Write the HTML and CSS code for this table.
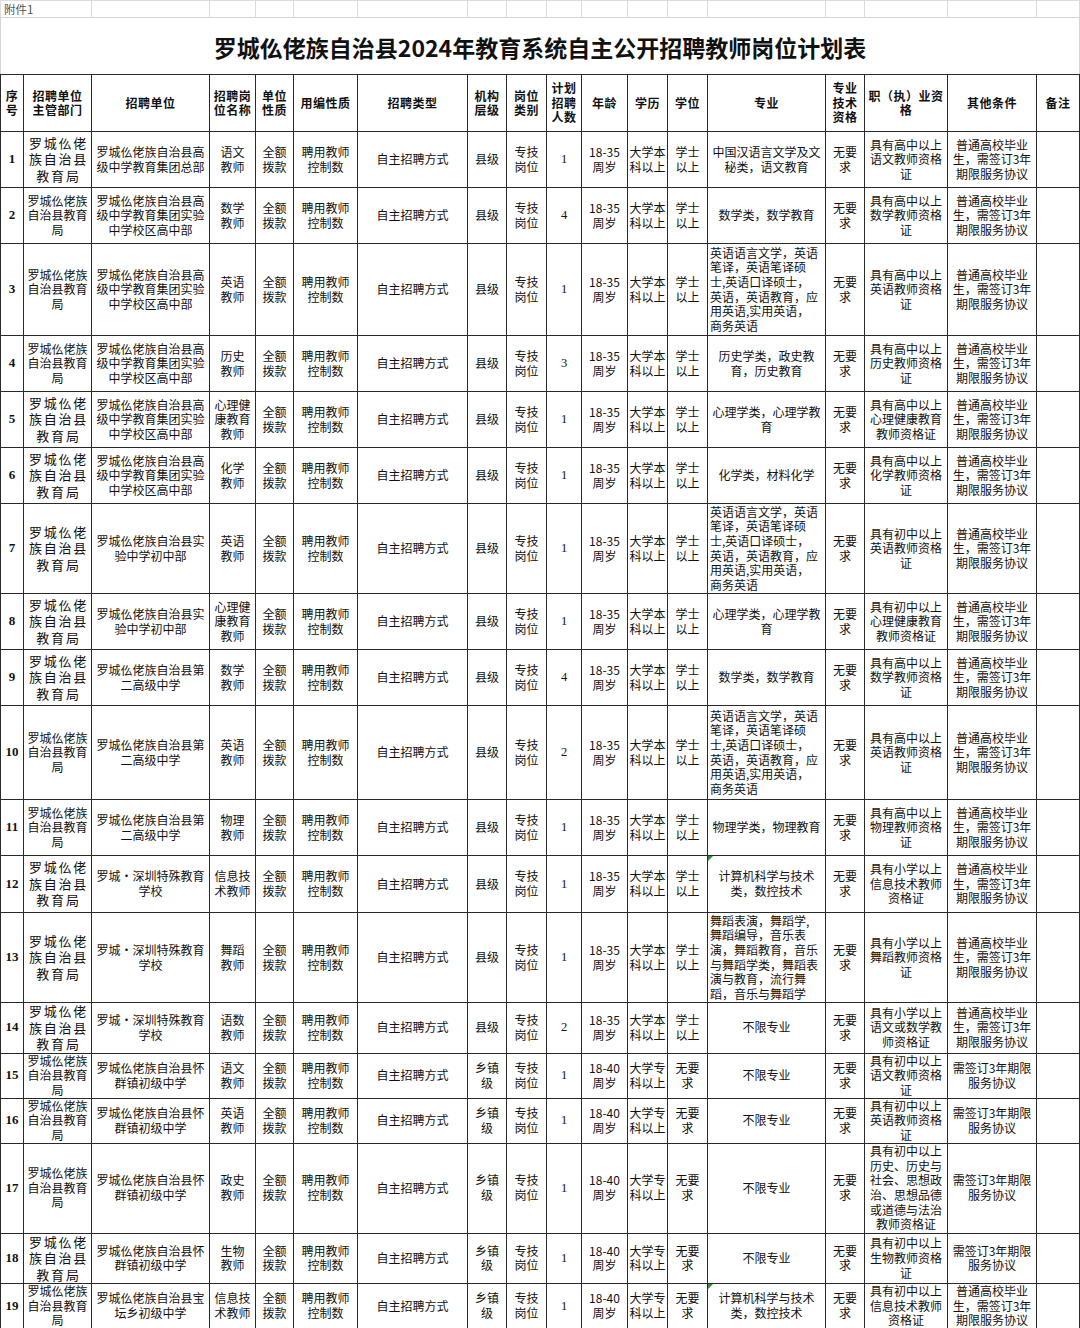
FILE: index.html
```html
<!DOCTYPE html>
<html lang="zh-CN">
<head>
<meta charset="utf-8">
<title>罗城仫佬族自治县2024年教育系统自主公开招聘教师岗位计划表</title>
<link rel="stylesheet" href="styles.css">
</head>
<body>
<table class="plan">
<colgroup>
<col class="c1"><col class="c2"><col class="c3"><col class="c4"><col class="c5"><col class="c6"><col class="c7"><col class="c8"><col class="c9"><col class="c10"><col class="c11"><col class="c12"><col class="c13"><col class="c14"><col class="c15"><col class="c16"><col class="c17"><col class="c18">
</colgroup>
<tbody>
<tr class="h17 annex"><td colspan="2" class="annex-label">附件1</td><td></td><td></td><td></td><td></td><td></td><td></td><td></td><td></td><td></td><td></td><td></td><td></td><td></td><td></td><td></td><td></td></tr>
<tr class="h57"><td colspan="18" class="title">罗城仫佬族自治县2024年教育系统自主公开招聘教师岗位计划表</td></tr>
<tr class="h57 head">
<td>序<br>号</td><td>招聘单位<br>主管部门</td><td>招聘单位</td><td>招聘岗<br>位名称</td><td>单位<br>性质</td><td>用编性质</td><td>招聘类型</td><td>机构<br>层级</td><td>岗位<br>类别</td><td>计划<br>招聘<br>人数</td><td>年龄</td><td>学历</td><td>学位</td><td>专业</td><td>专业<br>技术<br>资格</td><td>职（执）业资<br>格</td><td>其他条件</td><td>备注</td>
</tr>

<tr class="h56">
<td class="no">1</td><td class="dist">罗城仫佬<br>族自治县<br>教育局</td><td>罗城仫佬族自治县高<br>级中学教育集团总部</td><td>语文<br>教师</td><td>全额<br>拨款</td><td>聘用教师<br>控制数</td><td>自主招聘方式</td><td>县级</td><td>专技<br>岗位</td><td class="num">1</td><td>18-35<br>周岁</td><td>大学本<br>科以上</td><td>学士<br>以上</td><td>中国汉语言文学及文<br>秘类，语文教育</td><td>无要<br>求</td><td>具有高中以上<br>语文教师资格<br>证</td><td>普通高校毕业<br>生，需签订3年<br>期限服务协议</td><td></td>
</tr>

<tr class="h56">
<td class="no">2</td><td>罗城仫佬族<br>自治县教育<br>局</td><td>罗城仫佬族自治县高<br>级中学教育集团实验<br>中学校区高中部</td><td>数学<br>教师</td><td>全额<br>拨款</td><td>聘用教师<br>控制数</td><td>自主招聘方式</td><td>县级</td><td>专技<br>岗位</td><td class="num">4</td><td>18-35<br>周岁</td><td>大学本<br>科以上</td><td>学士<br>以上</td><td>数学类，数学教育</td><td>无要<br>求</td><td>具有高中以上<br>数学教师资格<br>证</td><td>普通高校毕业<br>生，需签订3年<br>期限服务协议</td><td></td>
</tr>

<tr class="h92">
<td class="no">3</td><td>罗城仫佬族<br>自治县教育<br>局</td><td>罗城仫佬族自治县高<br>级中学教育集团实验<br>中学校区高中部</td><td>英语<br>教师</td><td>全额<br>拨款</td><td>聘用教师<br>控制数</td><td>自主招聘方式</td><td>县级</td><td>专技<br>岗位</td><td class="num">1</td><td>18-35<br>周岁</td><td>大学本<br>科以上</td><td>学士<br>以上</td><td class="lft">英语语言文学，英语<br>笔译，英语笔译硕<br>士,英语口译硕士，<br>英语，英语教育，应<br>用英语,实用英语，<br>商务英语</td><td>无要<br>求</td><td>具有高中以上<br>英语教师资格<br>证</td><td>普通高校毕业<br>生，需签订3年<br>期限服务协议</td><td></td>
</tr>

<tr class="h56">
<td class="no">4</td><td>罗城仫佬族<br>自治县教育<br>局</td><td>罗城仫佬族自治县高<br>级中学教育集团实验<br>中学校区高中部</td><td>历史<br>教师</td><td>全额<br>拨款</td><td>聘用教师<br>控制数</td><td>自主招聘方式</td><td>县级</td><td>专技<br>岗位</td><td class="num">3</td><td>18-35<br>周岁</td><td>大学本<br>科以上</td><td>学士<br>以上</td><td>历史学类，政史教<br>育，历史教育</td><td>无要<br>求</td><td>具有高中以上<br>历史教师资格<br>证</td><td>普通高校毕业<br>生，需签订3年<br>期限服务协议</td><td></td>
</tr>

<tr class="h56">
<td class="no">5</td><td class="dist">罗城仫佬<br>族自治县<br>教育局</td><td>罗城仫佬族自治县高<br>级中学教育集团实验<br>中学校区高中部</td><td>心理健<br>康教育<br>教师</td><td>全额<br>拨款</td><td>聘用教师<br>控制数</td><td>自主招聘方式</td><td>县级</td><td>专技<br>岗位</td><td class="num">1</td><td>18-35<br>周岁</td><td>大学本<br>科以上</td><td>学士<br>以上</td><td>心理学类，心理学教<br>育</td><td>无要<br>求</td><td>具有高中以上<br>心理健康教育<br>教师资格证</td><td>普通高校毕业<br>生，需签订3年<br>期限服务协议</td><td></td>
</tr>

<tr class="h56">
<td class="no">6</td><td class="dist">罗城仫佬<br>族自治县<br>教育局</td><td>罗城仫佬族自治县高<br>级中学教育集团实验<br>中学校区高中部</td><td>化学<br>教师</td><td>全额<br>拨款</td><td>聘用教师<br>控制数</td><td>自主招聘方式</td><td>县级</td><td>专技<br>岗位</td><td class="num">1</td><td>18-35<br>周岁</td><td>大学本<br>科以上</td><td>学士<br>以上</td><td>化学类，材料化学</td><td>无要<br>求</td><td>具有高中以上<br>化学教师资格<br>证</td><td>普通高校毕业<br>生，需签订3年<br>期限服务协议</td><td></td>
</tr>

<tr class="h90">
<td class="no">7</td><td class="dist">罗城仫佬<br>族自治县<br>教育局</td><td>罗城仫佬族自治县实<br>验中学初中部</td><td>英语<br>教师</td><td>全额<br>拨款</td><td>聘用教师<br>控制数</td><td>自主招聘方式</td><td>县级</td><td>专技<br>岗位</td><td class="num">1</td><td>18-35<br>周岁</td><td>大学本<br>科以上</td><td>学士<br>以上</td><td class="lft">英语语言文学，英语<br>笔译，英语笔译硕<br>士,英语口译硕士，<br>英语，英语教育，应<br>用英语,实用英语，<br>商务英语</td><td>无要<br>求</td><td>具有初中以上<br>英语教师资格<br>证</td><td>普通高校毕业<br>生，需签订3年<br>期限服务协议</td><td></td>
</tr>

<tr class="h56">
<td class="no">8</td><td class="dist">罗城仫佬<br>族自治县<br>教育局</td><td>罗城仫佬族自治县实<br>验中学初中部</td><td>心理健<br>康教育<br>教师</td><td>全额<br>拨款</td><td>聘用教师<br>控制数</td><td>自主招聘方式</td><td>县级</td><td>专技<br>岗位</td><td class="num">1</td><td>18-35<br>周岁</td><td>大学本<br>科以上</td><td>学士<br>以上</td><td>心理学类，心理学教<br>育</td><td>无要<br>求</td><td>具有初中以上<br>心理健康教育<br>教师资格证</td><td>普通高校毕业<br>生，需签订3年<br>期限服务协议</td><td></td>
</tr>

<tr class="h56">
<td class="no">9</td><td class="dist">罗城仫佬<br>族自治县<br>教育局</td><td>罗城仫佬族自治县第<br>二高级中学</td><td>数学<br>教师</td><td>全额<br>拨款</td><td>聘用教师<br>控制数</td><td>自主招聘方式</td><td>县级</td><td>专技<br>岗位</td><td class="num">4</td><td>18-35<br>周岁</td><td>大学本<br>科以上</td><td>学士<br>以上</td><td>数学类，数学教育</td><td>无要<br>求</td><td>具有高中以上<br>数学教师资格<br>证</td><td>普通高校毕业<br>生，需签订3年<br>期限服务协议</td><td></td>
</tr>

<tr class="h94">
<td class="no">10</td><td>罗城仫佬族<br>自治县教育<br>局</td><td>罗城仫佬族自治县第<br>二高级中学</td><td>英语<br>教师</td><td>全额<br>拨款</td><td>聘用教师<br>控制数</td><td>自主招聘方式</td><td>县级</td><td>专技<br>岗位</td><td class="num">2</td><td>18-35<br>周岁</td><td>大学本<br>科以上</td><td>学士<br>以上</td><td class="lft">英语语言文学，英语<br>笔译，英语笔译硕<br>士,英语口译硕士，<br>英语，英语教育，应<br>用英语,实用英语，<br>商务英语</td><td>无要<br>求</td><td>具有高中以上<br>英语教师资格<br>证</td><td>普通高校毕业<br>生，需签订3年<br>期限服务协议</td><td></td>
</tr>

<tr class="h56">
<td class="no">11</td><td>罗城仫佬族<br>自治县教育<br>局</td><td>罗城仫佬族自治县第<br>二高级中学</td><td>物理<br>教师</td><td>全额<br>拨款</td><td>聘用教师<br>控制数</td><td>自主招聘方式</td><td>县级</td><td>专技<br>岗位</td><td class="num">1</td><td>18-35<br>周岁</td><td>大学本<br>科以上</td><td>学士<br>以上</td><td>物理学类，物理教育</td><td>无要<br>求</td><td>具有高中以上<br>物理教师资格<br>证</td><td>普通高校毕业<br>生，需签订3年<br>期限服务协议</td><td></td>
</tr>

<tr class="h57">
<td class="no">12</td><td class="dist">罗城仫佬<br>族自治县<br>教育局</td><td>罗城・深圳特殊教育<br>学校</td><td>信息技<br>术教师</td><td>全额<br>拨款</td><td>聘用教师<br>控制数</td><td>自主招聘方式</td><td>县级</td><td>专技<br>岗位</td><td class="num">1</td><td>18-35<br>周岁</td><td>大学本<br>科以上</td><td>学士<br>以上</td><td class="flag">计算机科学与技术<br>类，数控技术</td><td>无要<br>求</td><td>具有小学以上<br>信息技术教师<br>资格证</td><td>普通高校毕业<br>生，需签订3年<br>期限服务协议</td><td></td>
</tr>

<tr class="h90">
<td class="no">13</td><td class="dist">罗城仫佬<br>族自治县<br>教育局</td><td>罗城・深圳特殊教育<br>学校</td><td>舞蹈<br>教师</td><td>全额<br>拨款</td><td>聘用教师<br>控制数</td><td>自主招聘方式</td><td>县级</td><td>专技<br>岗位</td><td class="num">1</td><td>18-35<br>周岁</td><td>大学本<br>科以上</td><td>学士<br>以上</td><td class="lft">舞蹈表演，舞蹈学,<br>舞蹈编导，音乐表<br>演，舞蹈教育，音乐<br>与舞蹈学类，舞蹈表<br>演与教育，流行舞<br>蹈，音乐与舞蹈学</td><td>无要<br>求</td><td>具有小学以上<br>舞蹈教师资格<br>证</td><td>普通高校毕业<br>生，需签订3年<br>期限服务协议</td><td></td>
</tr>

<tr class="h50">
<td class="no">14</td><td class="dist">罗城仫佬<br>族自治县<br>教育局</td><td>罗城・深圳特殊教育<br>学校</td><td>语数<br>教师</td><td>全额<br>拨款</td><td>聘用教师<br>控制数</td><td>自主招聘方式</td><td>县级</td><td>专技<br>岗位</td><td class="num">2</td><td>18-35<br>周岁</td><td>大学本<br>科以上</td><td>学士<br>以上</td><td>不限专业</td><td>无要<br>求</td><td>具有小学以上<br>语文或数学教<br>师资格证</td><td>普通高校毕业<br>生，需签订3年<br>期限服务协议</td><td></td>
</tr>

<tr class="h45">
<td class="no">15</td><td>罗城仫佬族<br>自治县教育<br>局</td><td>罗城仫佬族自治县怀<br>群镇初级中学</td><td>语文<br>教师</td><td>全额<br>拨款</td><td>聘用教师<br>控制数</td><td>自主招聘方式</td><td>乡镇<br>级</td><td>专技<br>岗位</td><td class="num">1</td><td>18-40<br>周岁</td><td>大学专<br>科以上</td><td>无要<br>求</td><td>不限专业</td><td>无要<br>求</td><td>具有初中以上<br>语文教师资格<br>证</td><td>需签订3年期限<br>服务协议</td><td></td>
</tr>

<tr class="h45">
<td class="no">16</td><td>罗城仫佬族<br>自治县教育<br>局</td><td>罗城仫佬族自治县怀<br>群镇初级中学</td><td>英语<br>教师</td><td>全额<br>拨款</td><td>聘用教师<br>控制数</td><td>自主招聘方式</td><td>乡镇<br>级</td><td>专技<br>岗位</td><td class="num">1</td><td>18-40<br>周岁</td><td>大学专<br>科以上</td><td>无要<br>求</td><td>不限专业</td><td>无要<br>求</td><td>具有初中以上<br>英语教师资格<br>证</td><td>需签订3年期限<br>服务协议</td><td></td>
</tr>

<tr class="h90">
<td class="no">17</td><td>罗城仫佬族<br>自治县教育<br>局</td><td>罗城仫佬族自治县怀<br>群镇初级中学</td><td>政史<br>教师</td><td>全额<br>拨款</td><td>聘用教师<br>控制数</td><td>自主招聘方式</td><td>乡镇<br>级</td><td>专技<br>岗位</td><td class="num">1</td><td>18-40<br>周岁</td><td>大学专<br>科以上</td><td>无要<br>求</td><td>不限专业</td><td>无要<br>求</td><td>具有初中以上<br>历史、历史与<br>社会、思想政<br>治、思想品德<br>或道德与法治<br>教师资格证</td><td>需签订3年期限<br>服务协议</td><td></td>
</tr>

<tr class="h50">
<td class="no">18</td><td class="dist">罗城仫佬<br>族自治县<br>教育局</td><td>罗城仫佬族自治县怀<br>群镇初级中学</td><td>生物<br>教师</td><td>全额<br>拨款</td><td>聘用教师<br>控制数</td><td>自主招聘方式</td><td>乡镇<br>级</td><td>专技<br>岗位</td><td class="num">1</td><td>18-40<br>周岁</td><td>大学专<br>科以上</td><td>无要<br>求</td><td>不限专业</td><td>无要<br>求</td><td>具有初中以上<br>生物教师资格<br>证</td><td>需签订3年期限<br>服务协议</td><td></td>
</tr>

<tr class="h45">
<td class="no">19</td><td>罗城仫佬族<br>自治县教育<br>局</td><td>罗城仫佬族自治县宝<br>坛乡初级中学</td><td>信息技<br>术教师</td><td>全额<br>拨款</td><td>聘用教师<br>控制数</td><td>自主招聘方式</td><td>乡镇<br>级</td><td>专技<br>岗位</td><td class="num">1</td><td>18-40<br>周岁</td><td>大学专<br>科以上</td><td>无要<br>求</td><td class="flag">计算机科学与技术<br>类，数控技术</td><td>无要<br>求</td><td>具有初中以上<br>信息技术教师<br>资格证</td><td>普通高校毕业<br>生，需签订3年<br>期限服务协议</td><td></td>
</tr>
</tbody>
</table>
</body>
</html>
```
FILE: styles.css
```css
html, body {
  margin: 0;
  padding: 0;
  background: #fff;
}

.plan {
  border-collapse: collapse;
  table-layout: fixed;
  width: 1079px;
  font-family: "Noto Sans CJK SC", "Noto Sans", sans-serif;
  color: #111;
}

.c1 { width: 23px; }
.c2 { width: 68px; }
.c3 { width: 118px; }
.c4 { width: 46px; }
.c5 { width: 38px; }
.c6 { width: 64px; }
.c7 { width: 110px; }
.c8 { width: 39px; }
.c9 { width: 40px; }
.c10 { width: 35px; }
.c11 { width: 46px; }
.c12 { width: 40px; }
.c13 { width: 40px; }
.c14 { width: 118px; }
.c15 { width: 39px; }
.c16 { width: 83px; }
.c17 { width: 89px; }
.c18 { width: 43px; }

.plan td {
  border: 1px solid #2a2a2a;
  padding: 0;
  text-align: center;
  vertical-align: middle;
  font-size: 12px;
  line-height: 14.6px;
  white-space: nowrap;
  overflow: hidden;
}

.h17 { height: 17px; }
.h45 { height: 45px; }
.h50 { height: 50px; }
.h56 { height: 56px; }
.h57 { height: 57px; }
.h90 { height: 90px; }
.h92 { height: 92px; }
.h94 { height: 94px; }

.annex td {
  border: 1px solid #dcdcdc;
  border-bottom: 1px solid #d4d4d4;
}

.plan td.annex-label {
  text-align: left;
  padding-left: 3px;
  font-size: 11.5px;
  line-height: 15px;
  color: #555;
}

.plan td.title {
  border-top: none;
  border-left: 1px solid #d4d4d4;
  border-right: 1px solid #d4d4d4;
  border-bottom: 1px solid #2a2a2a;
  font-size: 23px;
  font-weight: 700;
  line-height: 30px;
  color: #111;
  padding-top: 2px;
}

.head td {
  font-weight: 700;
  letter-spacing: 0.5px;
  line-height: 14.5px;
}

.plan td.no {
  font-family: "Liberation Serif", serif;
  font-weight: 700;
  font-size: 13px;
}

.plan td.num {
  font-family: "Liberation Serif", serif;
  font-size: 12.5px;
}

.plan td.dist {
  font-size: 13px;
  letter-spacing: 1.8px;
  line-height: 16.5px;
  padding-left: 2px;
}

.plan td.lft {
  text-align: left;
  padding-left: 2px;
}

.plan td.flag {
  position: relative;
}

.plan td.flag::before {
  content: "";
  position: absolute;
  left: 0;
  top: 0;
  border-top: 5px solid #2e8b3a;
  border-right: 5px solid transparent;
}
```
